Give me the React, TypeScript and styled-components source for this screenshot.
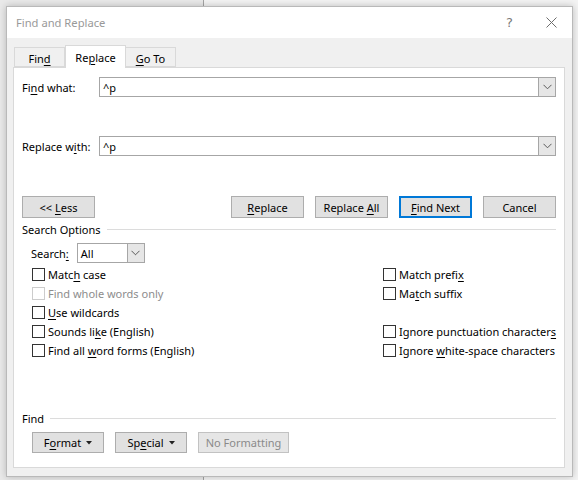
import styled, { createGlobalStyle } from 'styled-components';

const GlobalStyle = createGlobalStyle`
  html, body {
    margin: 0;
    padding: 0;
  }
  body {
    width: 578px;
    height: 480px;
    overflow: hidden;
    background: linear-gradient(to right, #e9e9e9 0, #e9e9e9 203px, #a3a3a3 203px, #a3a3a3 204px, #f3f3f3 204px);
    font-family: "Noto Sans", "Open Sans", sans-serif;
    font-size: 11px;
    color: #000;
  }
  u {
    text-decoration-thickness: 1px;
    text-underline-offset: 2px;
  }
`;

const Chevron = () => (
  <svg width="9" height="6" viewBox="0 0 9 6">
    <path d="M0.5 0.8 L4.5 4.8 L8.5 0.8" fill="none" stroke="#5a5a5a" strokeWidth="1" />
  </svg>
);

const Caret = () => (
  <svg width="6" height="4" viewBox="0 0 6 4">
    <polygon points="0,0 6,0 3,3.5" fill="#222" />
  </svg>
);

const App = () => {
  return (
    <>
      <GlobalStyle />
      <Page>
        <Dialog>
          <TitleBar>
            <Title>Find and Replace</Title>
            <TitleButtons>
              <Help>?</Help>
              <Close>
                <svg width="11" height="11" viewBox="0 0 11 11">
                  <path d="M0.5 0.5 L10.5 10.5 M10.5 0.5 L0.5 10.5" stroke="#6d6d6d" strokeWidth="1" />
                </svg>
              </Close>
            </TitleButtons>
          </TitleBar>
          <Body>
            <Tabs>
              <Tab $w={51}><span>Fin<u>d</u></span></Tab>
              <Tab $w={61} $active><span>Re<u>p</u>lace</span></Tab>
              <Tab $w={50}><span><u>G</u>o To</span></Tab>
            </Tabs>
            <Panel>
              <FieldRow>
                <FieldLabel>Fi<u>n</u>d what:</FieldLabel>
                <Combo>
                  <ComboText>^p</ComboText>
                  <ComboArrow><Chevron /></ComboArrow>
                </Combo>
              </FieldRow>
              <FieldRow $top={39}>
                <FieldLabel>Replace w<u>i</u>th:</FieldLabel>
                <Combo>
                  <ComboText>^p</ComboText>
                  <ComboArrow><Chevron /></ComboArrow>
                </Combo>
              </FieldRow>
              <ActionRow>
                <Button><span>&lt;&lt; <u>L</u>ess</span></Button>
                <ActionGroup>
                  <Button><span><u>R</u>eplace</span></Button>
                  <Button><span>Replace <u>A</u>ll</span></Button>
                  <Button $primary><span><u>F</u>ind Next</span></Button>
                  <Button>Cancel</Button>
                </ActionGroup>
              </ActionRow>
              <Section $top={3}>
                <SectionTitle>Search Options</SectionTitle>
                <SectionLine />
              </Section>
              <SearchRow>
                <span>Search<u>:</u></span>
                <Select>
                  <ComboText>All</ComboText>
                  <ComboArrow><Chevron /></ComboArrow>
                </Select>
              </SearchRow>
              <Options>
                <Check><Box /><span>Matc<u>h</u> case</span></Check>
                <Check><Box /><span>Match prefi<u>x</u></span></Check>
                <Check $disabled><Box $disabled /><span>Find whole words only</span></Check>
                <Check><Box /><span>Ma<u>t</u>ch suffix</span></Check>
                <Check><Box /><span><u>U</u>se wildcards</span></Check>
                <div />
                <Check><Box /><span>Sounds li<u>k</u>e (English)</span></Check>
                <Check><Box /><span>Ignore punctuation character<u>s</u></span></Check>
                <Check><Box /><span>Find all <u>w</u>ord forms (English)</span></Check>
                <Check><Box /><span>Ignore <u>w</u>hite-space characters</span></Check>
              </Options>
              <Bottom>
                <Section>
                  <SectionTitle>Find</SectionTitle>
                  <SectionLine />
                </Section>
                <FormatRow>
                  <SmallButton $w={72}><span>F<u>o</u>rmat</span><Caret /></SmallButton>
                  <SmallButton $w={72}><span>Sp<u>e</u>cial</span><Caret /></SmallButton>
                  <SmallButton $w={91} disabled>No Formatting</SmallButton>
                </FormatRow>
              </Bottom>
            </Panel>
          </Body>
        </Dialog>
      </Page>
    </>
  );
};

export default App;

const Page = styled.div`
  padding: 6px 0 0 6px;
`;

const Dialog = styled.div`
  width: 565px;
  height: 469px;
  border: 1px solid #b9b9b9;
  background: #f0f0f0;
  box-shadow: 0 0 7px rgba(0, 0, 0, 0.22);
  display: flex;
  flex-direction: column;
`;

const TitleBar = styled.div`
  height: 31px;
  background: #fff;
  display: flex;
  align-items: center;
  justify-content: space-between;
  padding: 0 15px 0 9px;
`;

const Title = styled.div`
  color: #999;
  font-size: 11.2px;
`;

const TitleButtons = styled.div`
  display: flex;
  align-items: center;
  gap: 33px;
`;

const Help = styled.div`
  color: #7a7a7a;
  font-size: 13px;
  font-family: "DejaVu Sans", sans-serif;
`;

const Close = styled.div`
  display: flex;
  align-items: center;
`;

const Body = styled.div`
  flex: 1;
  display: flex;
  flex-direction: column;
  padding: 7px 7px 8px 6px;
`;

const Tabs = styled.div`
  display: flex;
  align-items: flex-end;
  height: 22px;
  padding-left: 1px;
  position: relative;
  z-index: 1;
`;

const Tab = styled.div<{ $w: number; $active?: boolean }>`
  width: ${p => p.$w}px;
  height: ${p => (p.$active ? 23 : 20)}px;
  box-sizing: border-box;
  margin-bottom: ${p => (p.$active ? -1 : 0)}px;
  background: ${p => (p.$active ? '#fff' : '#f0f0f0')};
  border: 1px solid #d9d9d9;
  border-bottom: ${p => (p.$active ? 'none' : '1px solid #d9d9d9')};
  ${p => (p.$active ? '' : 'border-left: none;')}
  &:first-child {
    border-left: 1px solid #d9d9d9;
  }
  display: flex;
  align-items: center;
  justify-content: center;
  padding-top: ${p => (p.$active ? 0 : 3)}px;
`;

const Panel = styled.div`
  flex: 1;
  background: #fff;
  border: 1px solid #d9d9d9;
  padding: 9px 8px 14px 8px;
  display: flex;
  flex-direction: column;
`;

const FieldRow = styled.div<{ $top?: number }>`
  display: flex;
  align-items: center;
  height: 20px;
  margin-top: ${p => p.$top ?? 0}px;
`;

const FieldLabel = styled.div`
  width: 77px;
  flex-shrink: 0;
`;

const Combo = styled.div`
  flex: 1;
  height: 20px;
  box-sizing: border-box;
  border: 1px solid #a6a6a6;
  display: flex;
  align-items: stretch;
`;

const ComboText = styled.div`
  flex: 1;
  padding-left: 3px;
  display: flex;
  align-items: center;
`;

const ComboArrow = styled.div`
  width: 16px;
  background: #e6e6e6;
  border-left: 1px solid #a6a6a6;
  display: flex;
  align-items: center;
  justify-content: center;
`;

const ActionRow = styled.div`
  display: flex;
  justify-content: space-between;
  margin-top: 40px;
`;

const ActionGroup = styled.div`
  display: flex;
  gap: 11px;
`;

const Button = styled.div<{ $primary?: boolean }>`
  width: 73px;
  height: 22px;
  box-sizing: border-box;
  background: #e1e1e1;
  border: ${p => (p.$primary ? '2px solid #0078d7' : '1px solid #adadad')};
  display: flex;
  align-items: center;
  justify-content: center;
`;

const Section = styled.div<{ $top?: number }>`
  display: flex;
  align-items: center;
  height: 16px;
  margin-top: ${p => p.$top ?? 0}px;
`;

const SectionTitle = styled.div`
  padding-right: 6px;
`;

const SectionLine = styled.div`
  flex: 1;
  height: 1px;
  background: #dcdcdc;
`;

const SearchRow = styled.div`
  display: flex;
  align-items: center;
  gap: 8px;
  margin-top: 6px;
  padding-left: 9px;
`;

const Select = styled(Combo)`
  flex: none;
  width: 68px;
`;

const Options = styled.div`
  display: grid;
  grid-template-columns: 351px 1fr;
  grid-auto-rows: 19px;
  margin-top: 2px;
  padding-left: 10px;
`;

const Check = styled.div<{ $disabled?: boolean }>`
  display: flex;
  align-items: center;
  gap: 3px;
  white-space: nowrap;
  color: ${p => (p.$disabled ? '#8d8d8d' : '#000')};
`;

const Box = styled.span<{ $disabled?: boolean }>`
  width: 13px;
  height: 13px;
  box-sizing: border-box;
  border: 1px solid ${p => (p.$disabled ? '#cccccc' : '#333')};
  background: #fff;
  flex-shrink: 0;
`;

const Bottom = styled.div`
  margin-top: auto;
`;

const FormatRow = styled.div`
  display: flex;
  gap: 11px;
  margin-top: 6px;
  padding-left: 10px;
`;

const SmallButton = styled.button<{ $w: number }>`
  width: ${p => p.$w}px;
  height: 21px;
  box-sizing: border-box;
  background: ${p => (p.disabled ? '#e6e6e6' : '#e1e1e1')};
  border: 1px solid ${p => (p.disabled ? '#c2c2c2' : '#adadad')};
  color: ${p => (p.disabled ? '#8a8a8a' : '#000')};
  font: inherit;
  padding: 0;
  display: flex;
  align-items: center;
  justify-content: center;
  gap: 5px;
`;
